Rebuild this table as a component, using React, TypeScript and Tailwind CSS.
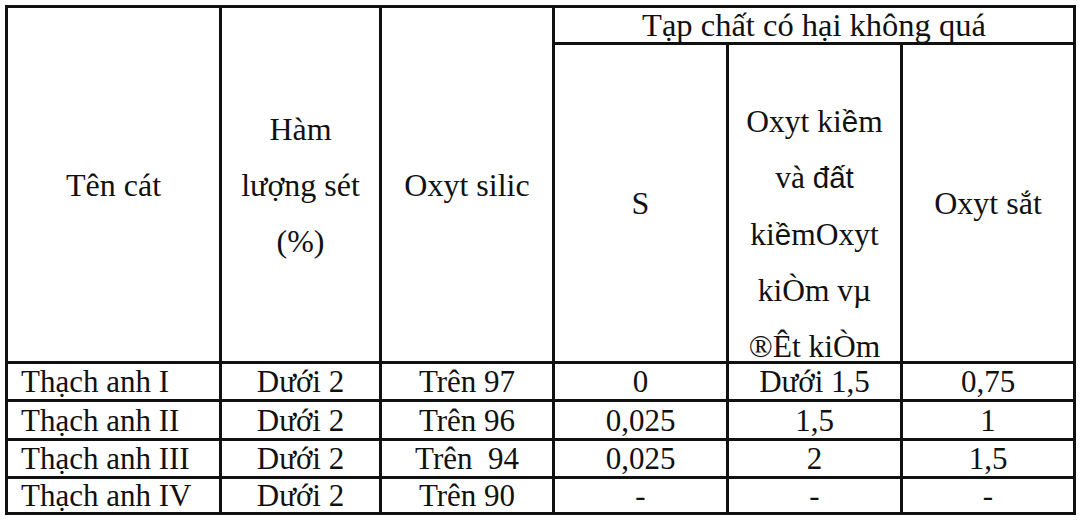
import React from "react";

const rows: string[][] = [
  ["Thạch anh I", "Dưới 2", "Trên 97", "0", "Dưới 1,5", "0,75"],
  ["Thạch anh II", "Dưới 2", "Trên 96", "0,025", "1,5", "1"],
  ["Thạch anh III", "Dưới 2", "Trên\u00a0 94", "0,025", "2", "1,5"],
  ["Thạch anh IV", "Dưới 2", "Trên 90", "-", "-", "-"],
];

export default function App() {
  return (
    <div className="w-[1080px] h-[521px] bg-white overflow-hidden font-['Liberation_Serif',serif] text-[31px] text-[#111]">
      <div className="ml-[5px] mt-[5px] w-[1071px] grid grid-cols-[211px_157px_170px_171px_171px_170px] grid-rows-[34px_316px_35px_36px_35px_33px] gap-[3px] p-[3px] bg-[#111]">
        <div className="row-span-2 bg-white flex items-center justify-center leading-[56px] text-[32px]">Tên cát</div>
        <div className="row-span-2 bg-white flex flex-col items-center justify-center leading-[56px] text-[32px]">
          <span>Hàm</span>
          <span>lượng sét</span>
          <span>(%)</span>
        </div>
        <div className="row-span-2 bg-white flex items-center justify-center leading-[56px] text-[32px]">Oxyt silic</div>
        <div className="col-span-3 bg-white flex items-center justify-center leading-[34px] text-[32.5px]">Tạp chất có hại không quá</div>
        <div className="bg-white flex items-center justify-center leading-[56px] text-[32px]">S</div>
        <div className="bg-white flex flex-col items-center pt-[49px] leading-[56.3px] whitespace-nowrap text-[31.5px]">
          <span className="leading-[56.3px]">
            Oxyt ki<span className="font-['Liberation_Sans',sans-serif] text-[29.5px]">ề</span>m
          </span>
          <span className="leading-[56.3px]">
            và <span className="font-['Liberation_Sans',sans-serif] text-[29.5px]">đất</span>
          </span>
          <span className="leading-[56.3px]">
            ki<span className="font-['Liberation_Sans',sans-serif] text-[29.5px]">ề</span>mOxyt
          </span>
          <span className="leading-[56.3px]">kiÒm vµ</span>
          <span className="leading-[20px] mt-[18px]">®Êt kiÒm</span>
        </div>
        <div className="bg-white flex items-center justify-center leading-[56px] text-[32px]">Oxyt sắt</div>
        {rows.map((r, i) =>
          r.map((c, j) => (
            <div
              key={`${i}-${j}`}
              className={
                j === 0
                  ? "bg-white flex items-center pl-[13px] whitespace-nowrap leading-none"
                  : "bg-white flex items-center justify-center whitespace-nowrap leading-none"
              }
            >
              {c}
            </div>
          ))
        )}
      </div>
    </div>
  );
}
